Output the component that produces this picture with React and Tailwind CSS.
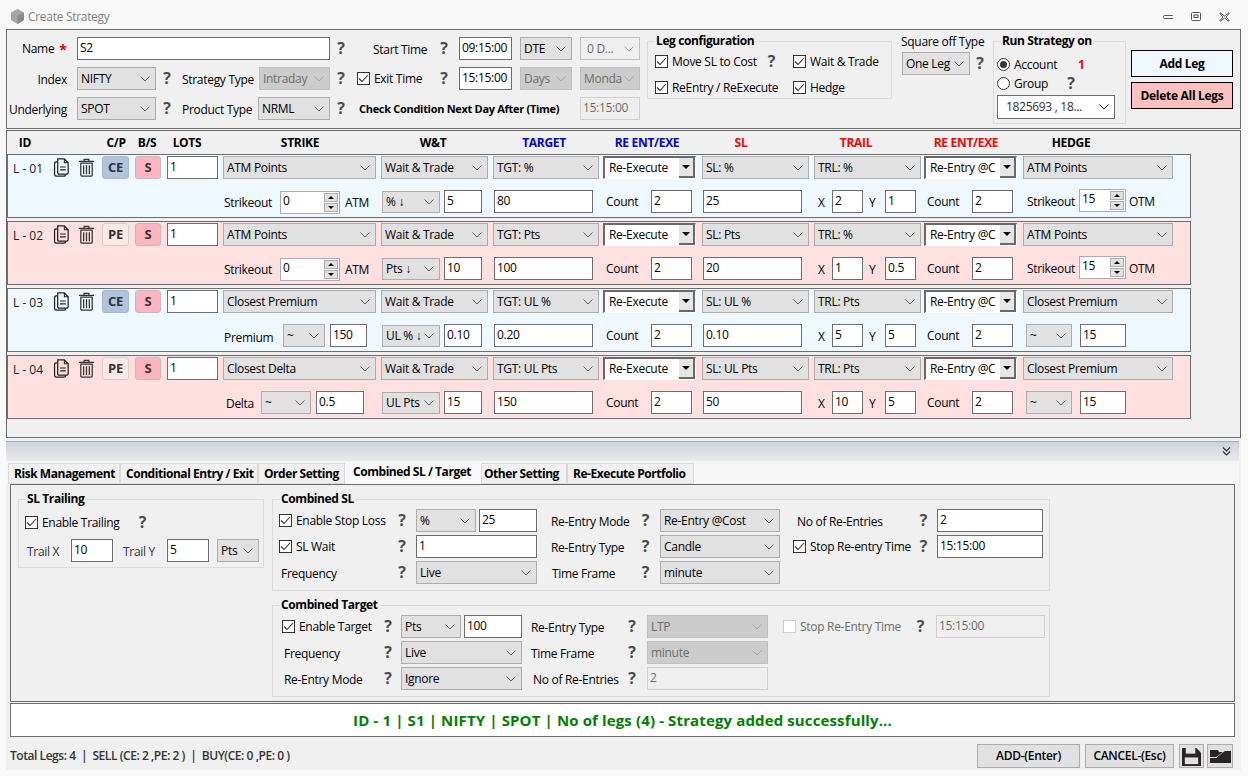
import React from "react";

function Chevron({ color = "#5f5f5f" }) {
  return (
    <svg width="10" height="6" viewBox="0 0 10 6" className="shrink-0">
      <path d="M0.5 0.5 L5 5 L9.5 0.5" fill="none" stroke={color} strokeWidth="1" />
    </svg>
  );
}

function Sel({ v, className = "", disabled = false, light = false }) {
  let look = "bg-[#e1e1e1] border-[#adadad] text-black";
  if (disabled) look = "bg-[#cccccc] border-[#bfbfbf] text-[#6d6d6d]";
  if (light) look = "bg-[#efefef] border-[#bfbfbf] text-[#6d6d6d]";
  return (
    <div className={"h-[23px] shrink-0 border flex items-center justify-between pl-[3px] pr-[5px] overflow-hidden " + look + " " + className}>
      <span className="whitespace-nowrap">{v}</span>
      <Chevron color={disabled || light ? "#a8a8a8" : "#5f5f5f"} />
    </div>
  );
}

function Inp({ v, className = "", disabled = false }) {
  const look = disabled ? "bg-[#efefef] border-[#d0d0d0] text-[#6d6d6d]" : "bg-white border-[#6d6d6d] text-black";
  return <div className={"h-[23px] shrink-0 border pl-[2px] pt-[1px] leading-[17px] whitespace-nowrap " + look + " " + className}>{v}</div>;
}

function Q({ className = "" }) {
  return <span className={"shrink-0 text-center font-bold text-[16px] leading-[20px] mb-[2px] text-[#4d4d4d] " + className}>?</span>;
}

function Check({ checked = true, disabled = false }) {
  return (
    <span className={"w-[13px] h-[13px] shrink-0 border flex items-center justify-center " + (disabled ? "bg-white border-[#cfcfcf]" : "bg-white border-[#333333]")}>
      {checked && (
        <svg width="11" height="9" viewBox="0 0 11 9">
          <path d="M1 4.5 L4 7.5 L10 1" fill="none" stroke="#333333" strokeWidth="1.1" />
        </svg>
      )}
    </span>
  );
}

function Radio({ on }) {
  return (
    <span className="w-[13px] h-[13px] shrink-0 rounded-full border border-[#333333] bg-white flex items-center justify-center">
      {on && <span className="w-[7px] h-[7px] rounded-full bg-[#333333]" />}
    </span>
  );
}

function Group({ title, className = "", children }) {
  return (
    <div className={"relative shrink-0 border border-[#dcdcdc] " + className}>
      <span className="absolute top-[-9px] left-[7px] bg-[#f0f0f0] px-[1px] font-bold tracking-[-0.4px] leading-[16px] whitespace-nowrap">{title}</span>
      {children}
    </div>
  );
}

function Combo({ v }) {
  return (
    <div className="w-[93px] h-[23px] shrink-0 flex bg-white border-t-2 border-l-2 border-t-[#696969] border-l-[#696969] border-r border-b border-r-white border-b-white">
      <span className="flex-1 pl-[4px] leading-[19px] whitespace-nowrap">{v}</span>
      <span className="w-[16px] shrink-0 flex items-center justify-center bg-[#e6e6e6] border-r-2 border-b-2 border-[#696969]">
        <span className="w-0 h-0 border-x-[4px] border-x-transparent border-t-[4px] border-t-black" />
      </span>
    </div>
  );
}

function Spin({ v, className = "" }) {
  return (
    <div className={"h-[23px] shrink-0 flex bg-white border border-[#adadad] " + className}>
      <span className="flex-1 pl-[2px] leading-[17px]">{v}</span>
      <span className="w-[16px] shrink-0 flex flex-col gap-[1px] p-[1px]">
        <span className="flex-1 flex items-center justify-center bg-[#e1e1e1] border border-[#adadad]">
          <span className="w-0 h-0 border-x-[3px] border-x-transparent border-b-[3px] border-b-black" />
        </span>
        <span className="flex-1 flex items-center justify-center bg-[#e1e1e1] border border-[#adadad]">
          <span className="w-0 h-0 border-x-[3px] border-x-transparent border-t-[3px] border-t-black" />
        </span>
      </span>
    </div>
  );
}

function CopyIcon() {
  return (
    <svg width="17" height="19" viewBox="0 0 17 20" className="shrink-0 mt-[2px]">
      <path d="M4.5 1 H11.5 L15.5 5 V15.5 Q15.5 17 14 17 H6 Q4.5 17 4.5 15.5 Z" fill="none" stroke="#222" strokeWidth="1.3" />
      <path d="M11.5 1 V5 H15.5" fill="none" stroke="#222" strokeWidth="1.1" />
      <path d="M4.5 4 H3 Q1.2 4 1.2 6 V17 Q1.2 19 3 19 H11 Q13 19 13 17" fill="none" stroke="#222" strokeWidth="1.3" />
      <path d="M7 9.5 H13 M7 12.5 H13" stroke="#222" strokeWidth="1.2" />
    </svg>
  );
}

function TrashIcon() {
  return (
    <svg width="17" height="19" viewBox="0 0 17 20" className="shrink-0 mt-[2px]">
      <path d="M6 3 V1.5 H11 V3 M0.5 3.5 H16.5" fill="none" stroke="#333" strokeWidth="1.3" />
      <path d="M2 5.5 H15 M2.5 5.5 V18 Q2.5 19 3.5 19 H13.5 Q14.5 19 14.5 18 V5.5" fill="none" stroke="#333" strokeWidth="1.3" />
      <path d="M5.5 7.5 V17 M8.5 7.5 V17 M11.5 7.5 V17" stroke="#333" strokeWidth="1.3" />
    </svg>
  );
}

const legs = [
  { id: "L - 01", bg: "bg-[#eff7ff]", cp: "CE", strike: "ATM Points", unit: "% ↓", wt: "5", tgtType: "TGT: %", tgt: "80", re: "Re-Execute", slType: "SL: %", sl: "25", trl: "TRL: %", x: "2", y: "1", hedge: "ATM Points", left: "strike", right: "spin" },
  { id: "L - 02", bg: "bg-[#ffe0e0]", cp: "PE", strike: "ATM Points", unit: "Pts ↓", wt: "10", tgtType: "TGT: Pts", tgt: "100", re: "Re-Execute", slType: "SL: Pts", sl: "20", trl: "TRL: %", x: "1", y: "0.5", hedge: "ATM Points", left: "strike", right: "spin" },
  { id: "L - 03", bg: "bg-[#eff7ff]", cp: "CE", strike: "Closest Premium", unit: "UL % ↓", wt: "0.10", tgtType: "TGT: UL %", tgt: "0.20", re: "Re-Execute", slType: "SL: UL %", sl: "0.10", trl: "TRL: Pts", x: "5", y: "5", hedge: "Closest Premium", left: "premium", right: "tilde" },
  { id: "L - 04", bg: "bg-[#ffe0e0]", cp: "PE", strike: "Closest Delta", unit: "UL Pts", wt: "15", tgtType: "TGT: UL Pts", tgt: "150", re: "Re-Execute", slType: "SL: UL Pts", sl: "50", trl: "TRL: Pts", x: "10", y: "5", hedge: "Closest Premium", left: "delta", right: "tilde" },
];

function LegRow({ leg }) {
  return (
    <div className={"h-[64px] w-[1184px] mb-[3px] border border-[#6d6d6d] pt-[1px] " + leg.bg}>
      <div className="flex items-start">
        <span className="w-[40px] ml-[5px] shrink-0 leading-[26px] tracking-normal text-[#222222]">{leg.id}</span>
        <CopyIcon />
        <span className="ml-[8px] shrink-0 flex"><TrashIcon /></span>
        <span className={"ml-[7px] w-[27px] h-[23px] shrink-0 rounded-[3px] border flex items-center justify-center font-bold text-[13px] pb-[2px] text-[#333333] " + (leg.cp === "CE" ? "bg-[#b0c4de] border-[#a8b8cc]" : "bg-[#ffe9e6] border-[#cfcfcf]")}>{leg.cp}</span>
        <span className="ml-[6px] w-[26px] h-[23px] shrink-0 rounded-[3px] border border-[#bdbdbd] bg-[#ffb6c1] flex items-center justify-center font-bold text-[13px] pb-[2px] text-[#333333]">S</span>
        <Inp v="1" className="ml-[6px] w-[51px]" />
        <Sel v={leg.strike} className="ml-[5px] w-[153px]" />
        <Sel v="Wait & Trade" className="ml-[5px] w-[107px]" />
        <Sel v={leg.tgtType} className="ml-[5px] w-[106px]" />
        <span className="ml-[4px] flex"><Combo v={leg.re} /></span>
        <Sel v={leg.slType} className="ml-[6px] w-[107px]" />
        <Sel v={leg.trl} className="ml-[5px] w-[107px]" />
        <span className="ml-[3px] flex"><Combo v="Re-Entry @C" /></span>
        <Sel v={leg.hedge} className="ml-[6px] w-[150px]" />
      </div>
      <div className="flex items-start mt-[8px]">
        <div className="ml-[216px] w-[158px] shrink-0 flex items-start">
          {leg.left === "strike" && (
            <>
              <span className="w-[56px] shrink-0 leading-[26px]">Strikeout</span>
              <Spin v="0" className="w-[60px] mt-[1px]" />
              <span className="ml-[5px] leading-[26px]">ATM</span>
            </>
          )}
          {leg.left === "premium" && (
            <>
              <span className="w-[59px] shrink-0 leading-[27px]">Premium</span>
              <Sel v="~" className="w-[42px]" />
              <Inp v="150" className="ml-[5px] w-[37px]" />
            </>
          )}
          {leg.left === "delta" && (
            <>
              <span className="ml-[2px] w-[35px] shrink-0 leading-[26px]">Delta</span>
              <Sel v="~" className="w-[50px]" />
              <Inp v="0.5" className="ml-[5px] w-[48px]" />
            </>
          )}
        </div>
        <Sel v={leg.unit} className="w-[58px] mt-[1px] !h-[22px]" />
        <Inp v={leg.wt} className="ml-[4px] w-[38px]" />
        <Inp v={leg.tgt} className="ml-[12px] w-[99px]" />
        <span className="w-[58px] shrink-0 pl-[13px] leading-[24px]">Count</span>
        <Inp v="2" className="w-[41px]" />
        <Inp v={leg.sl} className="ml-[11px] w-[99px]" />
        <span className="w-[30px] shrink-0 pl-[16px] leading-[25px]">X</span>
        <Inp v={leg.x} className="w-[31px]" />
        <span className="w-[22px] shrink-0 pl-[6px] leading-[25px]">Y</span>
        <Inp v={leg.y} className="w-[31px]" />
        <span className="w-[56px] shrink-0 pl-[11px] leading-[24px]">Count</span>
        <Inp v="2" className="w-[41px]" />
        {leg.right === "spin" ? (
          <>
            <span className="ml-[14px] w-[52px] shrink-0 leading-[24px]">Strikeout</span>
            <Spin v="15" className="w-[47px] mt-[-1px]" />
            <span className="ml-[3px] leading-[24px]">OTM</span>
          </>
        ) : (
          <>
            <Sel v="~" className="ml-[13px] w-[46px]" />
            <Inp v="15" className="ml-[8px] w-[46px]" />
          </>
        )}
      </div>
    </div>
  );
}

function TopPanel() {
  return (
    <div className="h-[100px] border border-[#6d6d6d] flex items-start">
      <div className="w-[633px] shrink-0 pt-[7px] flex flex-col gap-[7px]">
        <div className="flex items-center h-[23px]">
          <span className="w-[70px] shrink-0 pl-[15px] flex items-center">Name<span className="ml-[5px] text-[14px] leading-[16px] mt-[3px] text-[#e00000] font-bold">*</span></span>
          <Inp v="S2" className="w-[253px]" />
          <Q className="w-[22px]" />
          <span className="w-[82px] shrink-0 pl-[21px] pt-[2px]">Start Time</span>
          <Q className="w-[20px]" />
          <Inp v="09:15:00" className="ml-[5px] w-[53px]" />
          <Sel v="DTE" className="ml-[8px] w-[52px]" />
          <Sel v="0 D..." light className="ml-[8px] w-[60px] pl-[6px]" />
        </div>
        <div className="flex items-center h-[23px]">
          <span className="w-[60px] shrink-0 text-right pt-[2px]">Index</span>
          <Sel v="NIFTY" className="ml-[10px] w-[79px]" />
          <Q className="w-[22px]" />
          <span className="w-[81px] shrink-0 pl-[4px] pt-[2px]">Strategy Type</span>
          <Sel v="Intraday" disabled className="w-[71px]" />
          <Q className="w-[22px]" />
          <span className="ml-[5px] flex"><Check /></span>
          <span className="ml-[4px] w-[60px] shrink-0">Exit Time</span>
          <Q className="w-[20px]" />
          <Inp v="15:15:00" className="ml-[5px] w-[53px]" />
          <Sel v="Days" disabled className="ml-[8px] w-[52px]" />
          <Sel v="Monda" disabled className="ml-[8px] w-[60px]" />
        </div>
        <div className="flex items-center h-[23px]">
          <span className="w-[60px] shrink-0 text-right pt-[2px]">Underlying</span>
          <Sel v="SPOT" className="ml-[10px] w-[79px]" />
          <Q className="w-[22px]" />
          <span className="w-[80px] shrink-0 pl-[4px] pt-[2px]">Product Type</span>
          <Sel v="NRML" className="w-[72px]" />
          <Q className="w-[22px]" />
          <span className="w-[228px] shrink-0 pl-[7px] pt-[1px] font-bold text-[11px] whitespace-nowrap">Check Condition Next Day After (Time)</span>
          <Inp v="15:15:00" disabled className="w-[60px]" />
        </div>
      </div>
      <Group title="Leg configuration" className="ml-[7px] mt-[11px] w-[245px] h-[58px] pt-[13px] pl-[7px]">
        <div className="flex items-center h-[13px]">
          <Check />
          <span className="ml-[4px] w-[92px] shrink-0 whitespace-nowrap">Move SL to Cost</span>
          <Q className="w-[15px]" />
          <span className="ml-[14px] flex"><Check /></span>
          <span className="ml-[4px] whitespace-nowrap">Wait & Trade</span>
        </div>
        <div className="flex items-center h-[13px] mt-[13px]">
          <Check />
          <span className="ml-[4px] w-[121px] shrink-0 whitespace-nowrap">ReEntry / ReExecute</span>
          <Check />
          <span className="ml-[4px]">Hedge</span>
        </div>
      </Group>
      <div className="ml-[9px] w-[92px] shrink-0">
        <div className="mt-[4px] h-[16px] leading-[16px] whitespace-nowrap">Square off Type</div>
        <div className="flex items-center mt-[2px] pl-[1px]">
          <Sel v="One Leg" className="w-[68px]" />
          <Q className="w-[20px]" />
        </div>
      </div>
      <Group title="Run Strategy on" className="mt-[11px] w-[133px] h-[83px] pt-[16px] pl-[3px]">
        <div className="flex items-center h-[13px]">
          <Radio on />
          <span className="ml-[4px] w-[64px] shrink-0">Account</span>
          <span className="font-bold text-[#ff0000]">1</span>
        </div>
        <div className="flex items-center h-[13px] mt-[6px]">
          <Radio />
          <span className="ml-[4px] w-[50px] shrink-0">Group</span>
          <Q className="w-[14px]" />
        </div>
        <div className="mt-[5px] w-[118px] h-[24px] border border-[#6d6d6d] bg-white flex items-center justify-between pl-[8px] pr-[5px] text-[#333333] whitespace-nowrap">
          <span>1825693 , 18...</span>
          <Chevron color="#111111" />
        </div>
      </Group>
      <div className="ml-[5px] w-[102px] shrink-0 pt-[20px] flex flex-col gap-[5px]">
        <div className="h-[27px] border border-black bg-[#eff7ff] flex items-center justify-center font-bold">Add Leg</div>
        <div className="h-[27px] border border-black bg-[#ffc0c0] flex items-center justify-center font-bold">Delete All Legs</div>
      </div>
    </div>
  );
}

function LegsPanel() {
  return (
    <div className="h-[308px] mt-[1px] border border-[#6d6d6d]">
      <div className="h-[23px] grid grid-cols-[36px_58px_30px_32px_48px_178px_88px_134px_72px_116px_114px_106px_104px] items-center text-center font-bold whitespace-nowrap">
        <span>ID</span>
        <span />
        <span>C/P</span>
        <span>B/S</span>
        <span>LOTS</span>
        <span>STRIKE</span>
        <span>W&T</span>
        <span className="text-[#0000e0]">TARGET</span>
        <span className="text-[#0000e0]">RE ENT/EXE</span>
        <span className="text-[#ff0000]">SL</span>
        <span className="text-[#ff0000]">TRAIL</span>
        <span className="text-[#ff0000]">RE ENT/EXE</span>
        <span>HEDGE</span>
      </div>
      {legs.map((leg) => (
        <LegRow key={leg.id} leg={leg} />
      ))}
    </div>
  );
}

function Tabs() {
  const Tab = ({ t, className }) => (
    <span className={"h-[21px] mt-[2px] shrink-0 bg-[#f0f0f0] border border-[#d9d9d9] flex items-center font-bold tracking-[-0.45px] whitespace-nowrap " + className}>{t}</span>
  );
  return (
    <div className="h-[23px] flex items-start pl-[2px] bg-[#f6f6f6]">
      <Tab t="Risk Management" className="w-[112px] pl-[5px]" />
      <Tab t="Conditional Entry / Exit" className="w-[138px] pl-[5px]" />
      <Tab t="Order Setting" className="w-[87px] pl-[5px]" />
      <span className="ml-[1px] w-[135px] h-[23px] shrink-0 bg-[#f8f8f8] flex items-center pl-[7px] font-bold tracking-[-0.45px] whitespace-nowrap pb-[2px]">Combined SL / Target</span>
      <Tab t="Other Setting" className="w-[86px] pl-[2px]" />
      <Tab t="Re-Execute Portfolio" className="w-[127px] pl-[5px]" />
    </div>
  );
}

function TabBody() {
  return (
    <div className="ml-[4px] w-[1225px] h-[218px] border border-[#6d6d6d] flex items-start">
      <Group title="SL Trailing" className="ml-[7px] mt-[14px] w-[246px] h-[69px] pt-[16px] pl-[6px]">
        <div className="flex items-center h-[13px]">
          <Check />
          <span className="ml-[4px] w-[93px] shrink-0 whitespace-nowrap">Enable Trailing</span>
          <Q className="w-[15px]" />
        </div>
        <div className="flex items-center mt-[10px] text-[#333333]">
          <span className="ml-[2px] w-[44px] shrink-0 pt-[3px]">Trail X</span>
          <Inp v="10" className="w-[42px]" />
          <span className="w-[54px] shrink-0 pl-[10px] pt-[3px]">Trail Y</span>
          <Inp v="5" className="w-[42px]" />
          <Sel v="Pts" className="ml-[8px] w-[42px]" />
        </div>
      </Group>
      <div className="ml-[8px] shrink-0 pt-[14px]">
        <Group title="Combined SL" className="w-[778px] h-[92px] pt-[9px] flex flex-col gap-[3px]">
          <div className="flex items-center h-[23px]">
            <span className="w-[122px] shrink-0 pl-[6px] flex items-center"><Check /><span className="ml-[4px] whitespace-nowrap">Enable Stop Loss</span></span>
            <Q className="w-[14px]" />
            <Sel v="%" className="ml-[7px] w-[60px]" />
            <Inp v="25" className="ml-[3px] w-[58px]" />
            <span className="w-[102px] shrink-0 pl-[14px] pt-[2px] whitespace-nowrap">Re-Entry Mode</span>
            <Q className="w-[13px]" />
            <Sel v="Re-Entry @Cost" className="ml-[8px] w-[120px]" />
            <span className="w-[137px] shrink-0 pl-[17px] pt-[3px] whitespace-nowrap">No of Re-Entries</span>
            <Q className="w-[13px]" />
            <Inp v="2" className="ml-[7px] w-[106px]" />
          </div>
          <div className="flex items-center h-[23px]">
            <span className="w-[122px] shrink-0 pl-[6px] flex items-center"><Check /><span className="ml-[4px]">SL Wait</span></span>
            <Q className="w-[14px]" />
            <Inp v="1" className="ml-[7px] w-[121px]" />
            <span className="w-[102px] shrink-0 pl-[14px] pt-[2px] whitespace-nowrap">Re-Entry Type</span>
            <Q className="w-[13px]" />
            <Sel v="Candle" className="ml-[8px] w-[120px]" />
            <span className="w-[137px] shrink-0 pl-[13px] flex items-center"><Check /><span className="ml-[4px] whitespace-nowrap">Stop Re-entry Time</span></span>
            <Q className="w-[13px]" />
            <Inp v="15:15:00" className="ml-[7px] w-[106px]" />
          </div>
          <div className="flex items-center h-[23px]">
            <span className="w-[122px] shrink-0 pl-[8px] pt-[2px]">Frequency</span>
            <Q className="w-[14px]" />
            <Sel v="Live" className="ml-[7px] w-[121px]" />
            <span className="w-[102px] shrink-0 pl-[15px] pt-[2px] whitespace-nowrap">Time Frame</span>
            <Q className="w-[13px]" />
            <Sel v="minute" className="ml-[8px] w-[120px]" />
          </div>
        </Group>
        <Group title="Combined Target" className="mt-[14px] w-[778px] h-[92px] pt-[9px] flex flex-col gap-[3px]">
          <div className="flex items-center h-[23px]">
            <span className="w-[108px] shrink-0 pl-[9px] flex items-center"><Check /><span className="ml-[4px] whitespace-nowrap">Enable Target</span></span>
            <Q className="w-[14px]" />
            <Sel v="Pts" className="ml-[6px] w-[60px]" />
            <Inp v="100" className="ml-[3px] w-[58px]" />
            <span className="w-[103px] shrink-0 pl-[9px] pt-[2px] whitespace-nowrap">Re-Entry Type</span>
            <Q className="w-[14px]" />
            <Sel v="LTP" disabled className="ml-[8px] w-[121px]" />
            <span className="w-[146px] shrink-0 pl-[15px] flex items-center text-[#6d6d6d]"><Check checked={false} disabled /><span className="ml-[4px] whitespace-nowrap">Stop Re-Entry Time</span></span>
            <Q className="w-[13px]" />
            <Inp v="15:15:00" disabled className="ml-[9px] w-[109px]" />
          </div>
          <div className="flex items-center h-[23px]">
            <span className="w-[108px] shrink-0 pl-[11px] pt-[2px]">Frequency</span>
            <Q className="w-[14px]" />
            <Sel v="Live" className="ml-[6px] w-[121px]" />
            <span className="w-[103px] shrink-0 pl-[9px] pt-[2px] whitespace-nowrap">Time Frame</span>
            <Q className="w-[14px]" />
            <Sel v="minute" disabled className="ml-[8px] w-[121px]" />
          </div>
          <div className="flex items-center h-[23px]">
            <span className="w-[108px] shrink-0 pl-[11px] pt-[2px] whitespace-nowrap">Re-Entry Mode</span>
            <Q className="w-[14px]" />
            <Sel v="Ignore" className="ml-[6px] w-[121px]" />
            <span className="w-[103px] shrink-0 pl-[11px] pt-[3px] whitespace-nowrap">No of Re-Entries</span>
            <Q className="w-[14px]" />
            <Inp v="2" disabled className="ml-[8px] w-[121px]" />
          </div>
        </Group>
      </div>
    </div>
  );
}

function Footer() {
  return (
    <div className="h-[33px] flex items-start justify-between pl-[4px] pr-[8px]">
      <span className="mt-[11px] font-semibold tracking-[-0.45px] text-[#333333] whitespace-pre">Total Legs: 4  |  SELL (CE: 2 ,PE: 2 )  |  BUY(CE: 0 ,PE: 0 )</span>
      <div className="flex mt-[7px] gap-[5px]">
        <span className="w-[103px] h-[24px] bg-[#e1e1e1] border border-[#adadad] flex items-center justify-center font-semibold">ADD-(Enter)</span>
        <span className="w-[89px] h-[24px] bg-[#e1e1e1] border border-[#adadad] flex items-center justify-center font-semibold whitespace-nowrap">CANCEL-(Esc)</span>
        <span className="w-[25px] h-[24px] bg-[#e1e1e1] border border-[#adadad] flex items-center justify-center">
          <svg width="19" height="19" viewBox="0 0 20 20">
            <path d="M0 1 H15 L20 6 V20 H0 Z" fill="#2b2424" />
            <rect x="4" y="1" width="10" height="6" fill="#e1e1e1" />
            <rect x="3" y="11" width="14" height="7" fill="#e1e1e1" />
          </svg>
        </span>
        <span className="ml-[-2px] w-[26px] h-[24px] bg-[#e1e1e1] border border-[#adadad] flex items-center justify-center">
          <svg width="21" height="14" viewBox="0 0 21 14">
            <path d="M0 1 H8 L9 3 H13 L6 8 H0 Z" fill="#2b2424" />
            <path d="M7 8 L15 2 H21 V14 H0 V9 H7 Z" fill="#2b2424" />
          </svg>
        </span>
      </div>
    </div>
  );
}

export default function App() {
  return (
    <main className="w-[1248px] h-[776px] overflow-hidden bg-[#f9f9f9] text-[12px] leading-[16px] tracking-[-0.3px] text-black font-['Open_Sans',sans-serif]">
      <header className="h-[29px] flex items-center pl-[10px] pr-[18px] pt-[4px]">
        <svg width="15" height="15" viewBox="0 0 15 15">
          <path d="M7.5 0 L14 3.5 V11 L7.5 15 L1 11 V3.5 Z" fill="#a5a5a5" />
          <path d="M7.5 7 L14 3.5 V11 L7.5 15 Z" fill="#8a8a8a" />
        </svg>
        <span className="ml-[3px] text-[#808080]">Create Strategy</span>
        <div className="ml-auto flex gap-[18px] items-center">
          <svg width="10" height="4" viewBox="0 0 10 4"><rect x="0.5" y="0.5" width="10" height="3" rx="1" fill="none" stroke="#555" /></svg>
          <svg width="10" height="10" viewBox="0 0 10 10"><rect x="0.5" y="0.5" width="9" height="8" rx="1" fill="none" stroke="#555" /><rect x="3" y="3" width="4" height="2.5" fill="none" stroke="#555" /></svg>
          <svg width="11" height="10" viewBox="0 0 11 10"><path d="M1 0.5 L5.5 4 L10 0.5 M1 9.5 L5.5 6 L10 9.5 M0.5 1 L4 5 L0.5 9 M10.5 1 L7 5 L10.5 9" fill="none" stroke="#555" /></svg>
        </div>
      </header>
      <div className="ml-[6px] w-[1235px] h-[741px] bg-[#f0f0f0]">
        <TopPanel />
        <LegsPanel />
        <div className="mt-[3px] w-[1233px] h-[20px] flex items-center justify-end pr-[8px] border-t border-[#a8acb4] bg-gradient-to-b from-[#cdd2dc] to-[#e9eaec]">
          <svg width="9" height="9" viewBox="0 0 9 9"><path d="M1 0.5 L4.5 4 L8 0.5 M1 4.5 L4.5 8 L8 4.5" fill="none" stroke="#333" strokeWidth="1.2" /></svg>
        </div>
        <div className="w-[1233px]">
          <Tabs />
          <TabBody />
        </div>
        <div className="ml-[4px] w-[1225px] h-[34px] mt-[1px] border border-[#6d6d6d] bg-white flex items-center justify-center font-bold text-[15px] tracking-[0.13px] text-[#008000] whitespace-nowrap">
          ID - 1 | S1 | NIFTY | SPOT | No of legs (4) - Strategy added successfully...
        </div>
        <Footer />
      </div>
    </main>
  );
}
